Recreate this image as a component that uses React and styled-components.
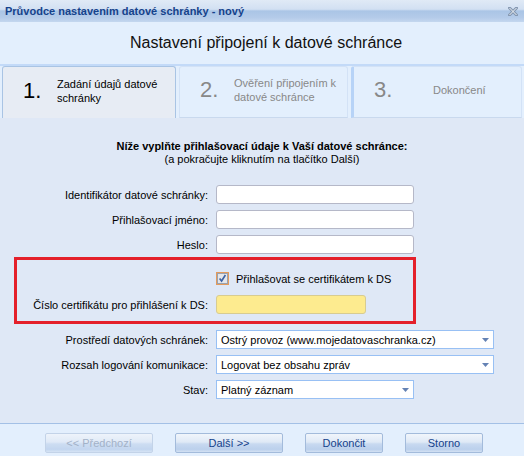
import React from 'react'
import styled, { createGlobalStyle } from 'styled-components'

const GlobalStyle = createGlobalStyle`
  html, body {
    margin: 0;
    padding: 0;
    background: #dfe8f6;
  }
  body {
    font-family: 'Liberation Sans', Arial, sans-serif;
    font-size: 11px;
    color: #000;
  }
`

const Window = styled.div`
  width: 524px;
  height: 456px;
  display: flex;
  flex-direction: column;
  overflow: hidden;
  background: #dfe8f6;
`

const TitleBar = styled.div`
  height: 22px;
  flex: none;
  display: flex;
  align-items: center;
  justify-content: space-between;
  padding: 0 6px 0 5px;
  box-sizing: border-box;
  background: linear-gradient(
    to bottom,
    #e0eaf6 0%,
    #d2e0f2 42%,
    #aac5e6 50%,
    #b4cbe9 80%,
    #c4d7ef 100%
  );
`

const TitleText = styled.span`
  font-weight: bold;
  font-size: 11px;
  color: #15428b;
`

const Header = styled.div`
  height: 42px;
  flex: none;
  display: flex;
  align-items: center;
  justify-content: center;
  padding-left: 8px;
  background: #e3effd;
`

const HeaderTitle = styled.h1`
  margin: 0;
  font-weight: normal;
  font-size: 16px;
  color: #111;
`

const TabStrip = styled.div`
  height: 54px;
  flex: none;
  display: flex;
  justify-content: space-between;
  padding: 0 2px;
  box-sizing: border-box;
  background: #e3effd;
  border-top: 2px solid #c3daf8;
`

const Tab = styled.div`
  width: ${(p) => p.$width}px;
  flex: none;
  display: flex;
  align-items: center;
  padding: 0 0 4px 20px;
  box-sizing: border-box;
  border: 1px solid ${(p) => (p.$active ? '#a9c4e4' : '#d3e2f6')};
  border-bottom: ${(p) => (p.$active ? 'none' : '1px solid #c9d9ee')};
  border-left: ${(p) => (p.$bar ? '3px solid #b7d3f7' : undefined)};
  border-radius: 3px 3px 0 0;
  background: ${(p) => (p.$active ? '#e7ecf4' : '#e3effd')};
  color: ${(p) => (p.$active ? '#000' : '#888')};
`

const TabNumber = styled.span`
  width: 34px;
  flex: none;
  font-size: 22px;
  line-height: 22px;
`

const TabLabel = styled.span`
  padding-left: ${(p) => p.$indent || 0}px;
  font-size: 11px;
  line-height: 14px;
`

const Body = styled.div`
  flex: 1;
  display: flex;
  flex-direction: column;
  padding-top: 22px;
  box-sizing: border-box;
  background: #dfe8f6;
`

const Intro = styled.div`
  text-align: center;
  line-height: 13px;
  font-size: 11px;
`

const IntroLead = styled.div`
  font-weight: bold;
`

const Form = styled.div`
  display: flex;
  flex-direction: column;
  gap: 6px;
  margin-top: 19px;
`

const Row = styled.div`
  display: grid;
  grid-template-columns: ${(p) => p.$labelWidth || 208}px auto;
  column-gap: 8px;
  align-items: center;
  justify-items: start;
`

const Label = styled.label`
  justify-self: end;
  white-space: nowrap;
`

const TextInput = styled.div`
  width: ${(p) => p.$width}px;
  height: 19px;
  box-sizing: border-box;
  border: 1px solid ${(p) => (p.$highlight ? '#d8cc90' : '#b5b8c8')};
  border-radius: 3px;
  background: ${(p) => (p.$highlight ? '#fdeb8f' : '#fff')};
`

const CertBox = styled.div`
  width: 402px;
  margin: -3px 0 0 14px;
  box-sizing: border-box;
  border: 3px solid #e4202b;
  padding: 12px 0 7px;
  display: flex;
  flex-direction: column;
  gap: 10px;
`

const CheckLine = styled.div`
  display: flex;
  align-items: center;
  gap: 7px;
  height: 13px;
`

const Combo = styled.div`
  width: ${(p) => p.$width}px;
  height: 19px;
  box-sizing: border-box;
  border: 1px solid #98c0f4;
  background: #fff;
  display: flex;
  align-items: center;
  justify-content: space-between;
  padding: 0 4px 0 4px;
  white-space: nowrap;
`

const Footer = styled.div`
  height: 33px;
  flex: none;
  display: flex;
  align-items: flex-start;
  gap: 22px;
  padding: 9px 0 0 45px;
  box-sizing: border-box;
  border-top: 1px solid #a3c0e6;
  background: #e3effd;
`

const Button = styled.button`
  width: ${(p) => p.$width}px;
  height: 20px;
  padding: 0;
  font-family: inherit;
  font-size: 11px;
  color: ${(p) => (p.disabled ? '#93a3bb' : '#15428b')};
  border: 1px solid ${(p) => (p.disabled ? '#bccde3' : '#a3bbdb')};
  border-radius: 2px;
  background: linear-gradient(
    to bottom,
    #f1f5fb 0%,
    #dfe9f6 45%,
    #c8d9f0 55%,
    #bbd0ec 85%,
    #d3e1f3 100%
  );
  opacity: ${(p) => (p.disabled ? 0.8 : 1)};
`

const CloseIcon = () => (
  <svg width='10' height='9' viewBox='0 0 10 9'>
    <path d='M1.5 1 L8.5 8 M8.5 1 L1.5 8' stroke='#8497b0' strokeWidth='3' strokeLinecap='square' />
    <path d='M1.5 1 L8.5 8 M8.5 1 L1.5 8' stroke='#eef2f7' strokeWidth='1' />
  </svg>
)

const CheckIcon = () => (
  <svg width='13' height='13' viewBox='0 0 13 13'>
    <rect x='0.5' y='0.5' width='12' height='12' fill='none' stroke='#e49b5c' />
    <rect x='1.5' y='1.5' width='10' height='10' fill='#e4e6ea' stroke='#9aa2ae' />
    <path d='M3.6 6.4 L5.6 9 L9.4 3' fill='none' stroke='#3c63a5' strokeWidth='1.6' />
  </svg>
)

const ComboArrow = () => (
  <svg width='7' height='4' viewBox='0 0 7 4'>
    <path d='M0 0 H7 L3.5 4 Z' fill='#6482b4' />
  </svg>
)

const ComboField = ({ width, value }) => (
  <Combo $width={width}>
    <span>{value}</span>
    <ComboArrow />
  </Combo>
)

const App = () => {
  return (
    <>
      <GlobalStyle />
      <Window>
        <TitleBar>
          <TitleText>Průvodce nastavením datové schránky - nový</TitleText>
          <CloseIcon />
        </TitleBar>

        <Header>
          <HeaderTitle>Nastavení připojení k datové schránce</HeaderTitle>
        </Header>

        <TabStrip>
          <Tab $active $width={174}>
            <TabNumber>1.</TabNumber>
            <TabLabel>
              Zadání údajů datové
              <br />
              schránky
            </TabLabel>
          </Tab>
          <Tab $width={169}>
            <TabNumber>2.</TabNumber>
            <TabLabel>
              Ověření připojením k
              <br />
              datové schránce
            </TabLabel>
          </Tab>
          <Tab $bar $width={171}>
            <TabNumber>3.</TabNumber>
            <TabLabel $indent={25}>Dokončení</TabLabel>
          </Tab>
        </TabStrip>

        <Body>
          <Intro>
            <IntroLead>Níže vyplňte přihlašovací údaje k Vaší datové schránce:</IntroLead>
            <div>(a pokračujte kliknutím na tlačítko Další)</div>
          </Intro>

          <Form>
            <Row>
              <Label>Identifikátor datové schránky:</Label>
              <TextInput $width={198} />
            </Row>
            <Row>
              <Label>Přihlašovací jméno:</Label>
              <TextInput $width={198} />
            </Row>
            <Row>
              <Label>Heslo:</Label>
              <TextInput $width={198} />
            </Row>

            <CertBox>
              <Row $labelWidth={191}>
                <span />
                <CheckLine>
                  <CheckIcon />
                  <span>Přihlašovat se certifikátem k DS</span>
                </CheckLine>
              </Row>
              <Row $labelWidth={191}>
                <Label>Číslo certifikátu pro přihlášení k DS:</Label>
                <TextInput $width={150} $highlight />
              </Row>
            </CertBox>

            <Row>
              <Label>Prostředí datových schránek:</Label>
              <ComboField width={278} value='Ostrý provoz (www.mojedatovaschranka.cz)' />
            </Row>
            <Row>
              <Label>Rozsah logování komunikace:</Label>
              <ComboField width={278} value='Logovat bez obsahu zpráv' />
            </Row>
            <Row>
              <Label>Stav:</Label>
              <ComboField width={198} value='Platný záznam' />
            </Row>
          </Form>
        </Body>

        <Footer>
          <Button $width={108} disabled>
            &lt;&lt; Předchozí
          </Button>
          <Button $width={108}>Další &gt;&gt;</Button>
          <Button $width={78}>Dokončit</Button>
          <Button $width={78}>Storno</Button>
        </Footer>
      </Window>
    </>
  )
}

export default App
